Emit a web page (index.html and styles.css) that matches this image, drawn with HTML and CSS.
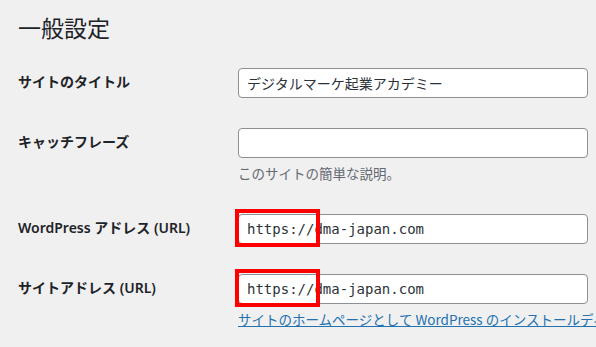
FILE: index.html
```html
<!doctype html>
<html lang="ja">
    <head>
        <meta charset="UTF-8" />
        <meta name="viewport" content="width=device-width, initial-scale=1.0" />
        <title>一般設定</title>
        <link rel="stylesheet" href="styles.css">
    </head>
    <body>
        <div class="wrap">
            <h1>一般設定</h1>
            <form class="form-table" method="POST">
                <div class="row">
                    <label for="blogname">サイトのタイトル</label>
                    <div class="field">
                        <input type="text" id="blogname" class="regular-text" value="デジタルマーケ起業アカデミー" />
                    </div>
                </div>

                <div class="row">
                    <label for="blogdescription">キャッチフレーズ</label>
                    <div class="field">
                        <input type="text" id="blogdescription" class="regular-text" value="" />
                        <p class="description">このサイトの簡単な説明。</p>
                    </div>
                </div>

                <div class="row">
                    <label for="siteurl">WordPress アドレス (URL)</label>
                    <div class="field">
                        <div class="marked">
                            <input type="url" id="siteurl" class="regular-text code" value="https://dma-japan.com" />
                            <span class="highlight"></span>
                        </div>
                    </div>
                </div>

                <div class="row">
                    <label for="home">サイトアドレス (URL)</label>
                    <div class="field">
                        <div class="marked">
                            <input type="url" id="home" class="regular-text code" value="https://dma-japan.com" />
                            <span class="highlight"></span>
                        </div>
                        <p class="description nowrap"><a href="#">サイトのホームページとして WordPress のインストールディレクトリとは異なる場所を使用する</a>場合は、ここにアドレスを入力してください。</p>
                    </div>
                </div>
            </form>
        </div>
    </body>
</html>
```

FILE: styles.css
```css
html,
body {
    overflow: hidden;
}
body {
    font-family: "Noto Sans", "Noto Sans CJK JP", sans-serif;
    background-color: #f0f0f1;
    color: #1d2327;
    margin: 0;
    font-size: 14px;
}
.wrap {
    padding-left: 18px;
}
h1 {
    font-family: "Noto Sans CJK JP", sans-serif;
    font-size: 23px;
    font-weight: 400;
    line-height: 30px;
    margin: 0;
    padding: 12px 0 11px;
    color: #1d2327;
}
.row {
    display: grid;
    grid-template-columns: 210px 1fr;
}
.row label {
    font-weight: 600;
    line-height: 18px;
    padding: 20px 10px 20px 0;
}
.field {
    padding: 15px 0 15px 10px;
}
.regular-text {
    display: block;
    width: 350px;
    height: 30px;
    box-sizing: border-box;
    margin: 0;
    padding: 0 8px;
    border: 1px solid #8c8f94;
    border-radius: 4px;
    background: #fff;
    color: #2c3338;
    font-family: "Noto Sans CJK JP", sans-serif;
    font-size: 14px;
}
.code {
    font-family: "DejaVu Sans Mono", monospace;
}
.marked {
    position: relative;
    width: 350px;
}
.highlight {
    position: absolute;
    left: -3px;
    top: -5px;
    width: 85px;
    height: 38px;
    box-sizing: border-box;
    border: 4px solid #ff0000;
}
.description {
    margin: 5px 0 0;
    font-size: 13.5px;
    line-height: 21px;
    color: #646970;
    font-family: "Noto Sans CJK JP", sans-serif;
}
.nowrap {
    white-space: nowrap;
}
.description a {
    color: #2271b1;
}
```
